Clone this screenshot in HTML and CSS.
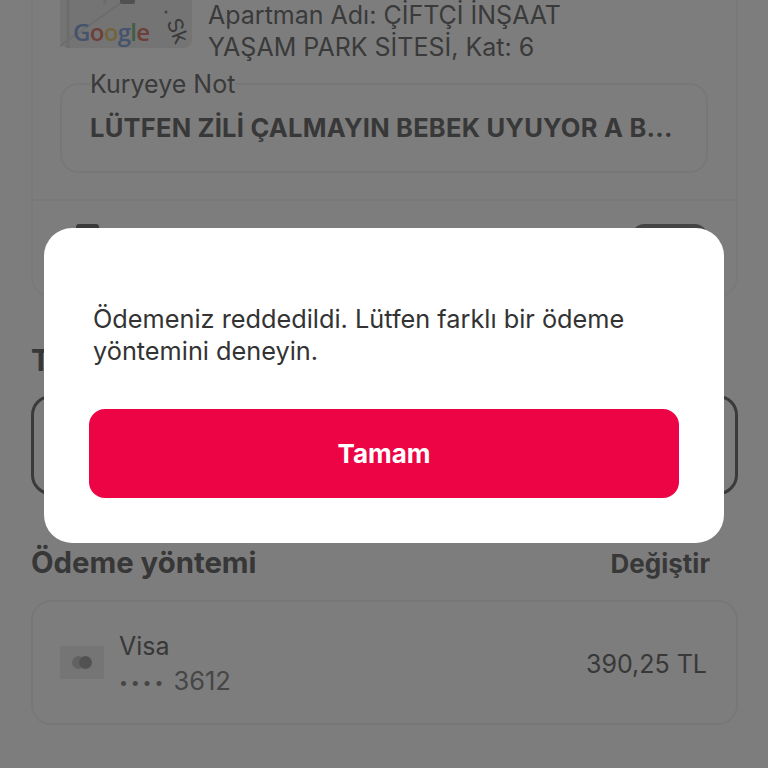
FILE: index.html
```html
<!DOCTYPE html>
<html lang="tr">

<head>
    <meta charset="UTF-8">
    <meta name="viewport" content="width=device-width, initial-scale=1.0">
    <title>Ödeme</title>
    <link rel="stylesheet" href="styles.css">
</head>

<body>
    <div class="page">
        <!-- Teslimat adresi -->
        <section class="address-card">
            <div class="address-row">
                <div class="map">
                    <svg class="map-roads" viewBox="0 71 132 49" aria-hidden="true">
                        <path d="M0 118 L96 50 L132 24" fill="none" stroke="#dcdcdc" stroke-width="2" />
                        <path d="M8 0 L8 120" fill="none" stroke="#dedede" stroke-width="3" />
                        <path d="M44 76 L76 0" fill="none" stroke="#dcdcdc" stroke-width="3" />
                        <rect x="60" y="60" width="15" height="16" rx="2" fill="#a6a6a6" />
                        <circle cx="106" cy="84" r="1.5" fill="#8a8a8a" />
                    </svg>
                    <span class="map-street">Sk</span>
                    <span class="map-logo"><span class="g-blue">G</span><span class="g-red">o</span><span class="g-yellow">o</span><span class="g-blue">g</span><span class="g-green">l</span><span class="g-red">e</span></span>
                </div>
                <p class="address-text">Apartman Adı: ÇİFTÇİ İNŞAAT<br>YAŞAM PARK SİTESİ, Kat: 6</p>
            </div>

            <fieldset class="note">
                <legend>Kuryeye Not</legend>
                <div class="note-text">LÜTFEN ZİLİ ÇALMAYIN BEBEK UYUYOR A B...</div>
            </fieldset>

            <div class="address-footer">
                <span class="footer-icon"></span>
                <span class="footer-pill"></span>
            </div>
        </section>

        <!-- Teslimat zamani -->
        <h2 class="section-title title-time">T</h2>
        <div class="time-box"></div>

        <!-- Odeme yontemi -->
        <div class="section-head">
            <h2 class="section-title">Ödeme yöntemi</h2>
            <a class="change-link">Değiştir</a>
        </div>
        <div class="payment-card">
            <div class="card-logo">
                <span class="dot-left"></span>
                <span class="dot-right"></span>
            </div>
            <div class="card-info">
                <div class="card-name">Visa</div>
                <div class="card-number"><span class="card-dots">••••</span> 3612</div>
            </div>
            <div class="card-amount">390,25 TL</div>
        </div>
    </div>

    <!-- Hata penceresi -->
    <div class="overlay">
        <div class="dialog">
            <p class="dialog-text">Ödemeniz reddedildi. Lütfen farklı bir ödeme yöntemini deneyin.</p>
            <button class="dialog-button" type="button">Tamam</button>
        </div>
    </div>
</body>

</html>
```

FILE: styles.css
```css
/* Genel */
html,
body {
    margin: 0;
    padding: 0;
    height: 100%;
    overflow: hidden;
}

body {
    font-family: Inter, "Liberation Sans", sans-serif;
    color: #666;
    background-color: #fff;
}

/* Sayfa alttan hizalanir, ust kisim ekranin disina tasar */
.page {
    height: 768px;
    box-sizing: border-box;
    display: flex;
    flex-direction: column;
    justify-content: flex-end;
    padding: 0 30px 43px 31px;
    overflow: hidden;
}

/* Adres karti */
.address-card {
    flex-shrink: 0;
    border: 2px solid #f6f6f6;
    border-top: 0;
    border-radius: 0 0 20px 20px;
    padding: 0 28px 0 27px;
    height: 298px;
    box-sizing: border-box;
}

.address-row {
    display: flex;
    gap: 16px;
    height: 61px;
}

.map {
    position: relative;
    width: 132px;
    height: 49px;
    flex-shrink: 0;
    background-color: #ececec;
    border-radius: 0 0 8px 8px;
}

.map-roads {
    display: block;
    width: 132px;
    height: 49px;
}

.map-logo {
    position: absolute;
    left: 13px;
    bottom: 1px;
    font-family: "Open Sans", sans-serif;
    font-size: 24px;
    line-height: 30px;
    font-weight: 600;
    letter-spacing: -0.7px;
}

.g-blue { color: #8ea9dd; }
.g-red { color: #dd8278; }
.g-yellow { color: #e6cf7a; }
.g-green { color: #86bd8e; }

.map-street {
    position: absolute;
    right: 2px;
    bottom: 5px;
    font-size: 21px;
    line-height: 24px;
    color: #777;
    transform: rotate(68deg);
}

.address-text {
    margin: 0;
    font-size: 25px;
    line-height: 32px;
    color: #777;
    white-space: nowrap;
}

/* Kuryeye not alani */
.note {
    margin: 9px 0 0;
    padding: 0 28px;
    height: 104px;
    box-sizing: border-box;
    border: 2px solid #f3f3f3;
    border-radius: 18px;
    min-width: 0;
}

.note legend {
    padding: 0;
    font-size: 25px;
    line-height: 30px;
    color: #777;
}

.note-text {
    margin-top: 14px;
    font-size: 25.5px;
    line-height: 30px;
    font-weight: 700;
    letter-spacing: 0.22px;
    color: #737373;
    white-space: nowrap;
}

.address-footer {
    display: flex;
    justify-content: space-between;
    align-items: flex-start;
    margin: 26px -28px 0 -27px;
    padding: 23px 29px 0 43px;
    border-top: 2px solid #f7f7f7;
}

.footer-icon {
    width: 23px;
    height: 30px;
    background-color: #777;
    border-radius: 3px;
}

.footer-pill {
    width: 75px;
    height: 30px;
    background-color: #8c8c8c;
    border-radius: 12px 12px 0 0;
}

/* Bolum basliklari */
.section-title {
    margin: 0;
    font-size: 29.3px;
    line-height: 34px;
    font-weight: 700;
    color: #707070;
    white-space: nowrap;
}

.title-time {
    flex-shrink: 0;
    margin-top: 47px;
}

.time-box {
    flex-shrink: 0;
    height: 100px;
    box-sizing: border-box;
    margin-top: 17px;
    border: 3px solid #777;
    border-radius: 20px;
}

.section-head {
    flex-shrink: 0;
    display: flex;
    justify-content: space-between;
    align-items: center;
    margin-top: 51px;
}

.change-link {
    margin-right: 28px;
    font-size: 26px;
    font-weight: 700;
    color: #737373;
}

/* Odeme karti */
.payment-card {
    flex-shrink: 0;
    display: flex;
    align-items: center;
    height: 125px;
    box-sizing: border-box;
    margin-top: 20px;
    padding: 0 29px 0 27px;
    border: 2px solid #f3f3f3;
    border-radius: 20px;
}

.card-logo {
    width: 44px;
    height: 33px;
    background-color: #efefef;
    border-radius: 2px;
    display: flex;
    justify-content: center;
    align-items: center;
}

.dot-left,
.dot-right {
    width: 13px;
    height: 13px;
    border-radius: 50%;
}

.dot-left {
    background-color: #c8c8c8;
}

.dot-right {
    margin-left: -6px;
    background-color: #a8a8a8;
}

.card-info {
    flex: 1;
    margin: 4px 0 0 15px;
}

.card-name {
    font-size: 25px;
    line-height: 34px;
    color: #737373;
}

.card-number {
    font-size: 25.5px;
    line-height: 36px;
    color: #8f8f8f;
}

.card-dots {
    letter-spacing: 2.8px;
    font-size: 16px;
    vertical-align: 2px;
}

.card-amount {
    padding-top: 2px;
    font-size: 25px;
    color: #737373;
}

/* Karartma ve pencere */
.overlay {
    position: fixed;
    inset: 0;
    display: flex;
    justify-content: center;
    align-items: center;
    padding-top: 3px;
    background-color: rgba(0, 0, 0, 0.51);
}

.dialog {
    width: 680px;
    height: 315px;
    box-sizing: border-box;
    padding: 75px 45px 45px;
    display: flex;
    flex-direction: column;
    justify-content: space-between;
    background-color: #fff;
    border-radius: 28px;
}

.dialog-text {
    margin: 0;
    padding: 0 4px;
    font-size: 25.3px;
    line-height: 32px;
    color: #333;
}

.dialog-button {
    height: 89px;
    border: none;
    border-radius: 16px;
    background-color: #ec0445;
    color: #fff;
    font-family: inherit;
    font-size: 26px;
    font-weight: 700;
    cursor: pointer;
}
```
